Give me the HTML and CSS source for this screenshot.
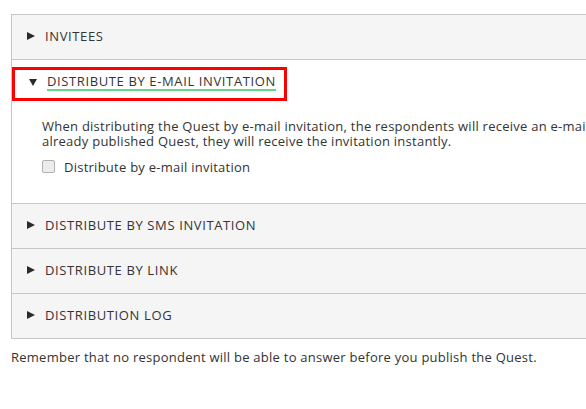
FILE: index.html
```html
<!DOCTYPE html>
<html>
<head>
<meta charset="utf-8">
<link rel="stylesheet" href="styles.css">
</head>
<body>
<div class="page">
  <div class="accordion">
    <div class="row">
      <svg class="tri" width="8" height="8" viewBox="0 0 8 8"><polygon points="0,0 8,4 0,8"/></svg>
      <span class="row-title">INVITEES</span>
    </div>
    <div class="section">
      <div class="section-head">
        <svg class="tri" width="8" height="8" viewBox="0 0 8 8"><polygon points="0,0 8,0 4,7"/></svg>
        <span class="section-title">DISTRIBUTE BY E-MAIL INVITATION</span>
      </div>
      <p class="desc">When distributing the Quest by e-mail invitation, the respondents will receive an e-mail with a link to the Quest when it is published. If you add invitees to an<br>already published Quest, they will receive the invitation instantly.</p>
      <label class="check"><span class="box"></span>Distribute by e-mail invitation</label>
    </div>
    <div class="row">
      <svg class="tri" width="8" height="8" viewBox="0 0 8 8"><polygon points="0,0 8,4 0,8"/></svg>
      <span class="row-title">DISTRIBUTE BY SMS INVITATION</span>
    </div>
    <div class="row">
      <svg class="tri" width="8" height="8" viewBox="0 0 8 8"><polygon points="0,0 8,4 0,8"/></svg>
      <span class="row-title">DISTRIBUTE BY LINK</span>
    </div>
    <div class="row">
      <svg class="tri" width="8" height="8" viewBox="0 0 8 8"><polygon points="0,0 8,4 0,8"/></svg>
      <span class="row-title">DISTRIBUTION LOG</span>
    </div>
  </div>
  <p class="note">Remember that no respondent will be able to answer before you publish the Quest.</p>
</div>
</body>
</html>
```

FILE: styles.css
```css
html, body {
  margin: 0;
  padding: 0;
  background: #ffffff;
  overflow: hidden;
}
body {
  width: 586px;
  height: 409px;
  font-family: "Open Sans", "DejaVu Sans", sans-serif;
  color: #333333;
  font-size: 13px;
  letter-spacing: 0.25px;
}
.page {
  padding: 14px 0 0 11px;
  width: 900px;
}
.accordion {
  border: 1px solid #c6c6c6;
  border-right: none;
  width: 880px;
}
.row {
  height: 42px;
  padding-bottom: 2px;
  background: #f5f5f5;
  display: flex;
  align-items: center;
  padding-left: 15px;
  border-bottom: 1px solid #c6c6c6;
}
.row:last-child {
  border-bottom: none;
}
.tri {
  fill: #2b2b2b;
  flex: none;
}
.row-title {
  margin-left: 10px;
  letter-spacing: 0.62px;
}
.section {
  height: 144px;
  border-bottom: 1px solid #c6c6c6;
  background: #ffffff;
  box-sizing: border-box;
  padding-top: 7px;
}
.section-head {
  box-sizing: border-box;
  width: 275px;
  height: 34px;
  border: 3px solid #ff0000;
  display: flex;
  align-items: center;
  padding-left: 14px;
  padding-bottom: 2px;
}
.section-title {
  margin-left: 10px;
  letter-spacing: 0.62px;
  border-bottom: 2px solid #5fd88a;
  line-height: 13px;
  padding-bottom: 1px;
}
.desc {
  margin: 18px 0 0 30px;
  line-height: 15px;
  white-space: nowrap;
}
.check {
  display: flex;
  align-items: center;
  margin: 9px 0 0 30px;
  height: 17px;
}
.box {
  width: 11px;
  height: 11px;
  border: 1px solid #b0b0b0;
  border-radius: 2px;
  background: #ececec;
  margin-right: 9px;
}
.note {
  margin: 11px 0 0 0;
  line-height: 15px;
}
```
